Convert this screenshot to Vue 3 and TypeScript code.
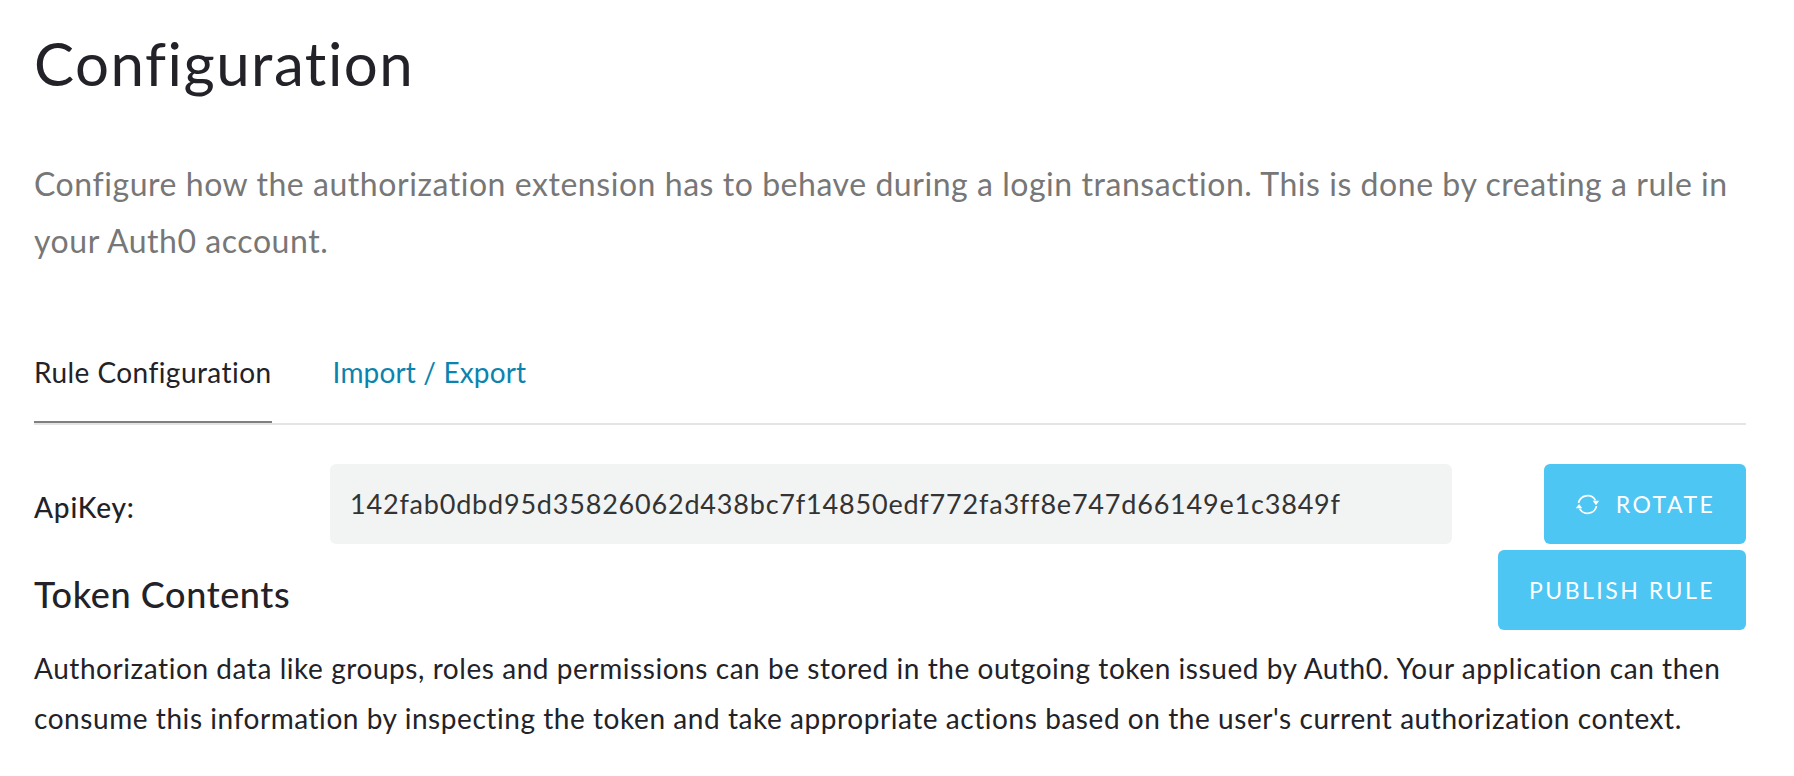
<script setup lang="ts">
const tabs = [
  { label: 'Rule Configuration', active: true },
  { label: 'Import / Export', active: false },
]
const apiKey = '142fab0dbd95d35826062d438bc7f14850edf772fa3ff8e747d66149e1c3849f'
</script>

<template>
  <main class="page">
    <h1 class="title">Configuration</h1>
    <p class="lead">
      Configure how the authorization extension has to behave during a login transaction. This is done by creating a rule in your Auth0 account.
    </p>
    <nav class="tabs">
      <a v-for="tab in tabs" :key="tab.label" class="tab" :class="{ active: tab.active }">{{ tab.label }}</a>
    </nav>
    <div class="key-row">
      <label class="key-label">ApiKey:</label>
      <div class="key-value">{{ apiKey }}</div>
      <button class="btn rotate">
        <svg class="icon" viewBox="0 0 24 24" fill="none" stroke="#fff" stroke-width="1.6">
          <path d="M3.4 10.4A8.8 8.8 0 0 1 19.6 8" />
          <path d="M20.6 13.6A8.8 8.8 0 0 1 4.4 16" />
          <path d="M17 8.4h6.2l-3.1 4.2z" fill="#fff" stroke="none" />
          <path d="M7 15.6H.8l3.1-4.2z" fill="#fff" stroke="none" />
        </svg>
        <span>ROTATE</span>
      </button>
    </div>
    <div class="token-head">
      <h2 class="subtitle">Token Contents</h2>
      <button class="btn publish">PUBLISH RULE</button>
    </div>
    <p class="body">
      Authorization data like groups, roles and permissions can be stored in the outgoing token issued by Auth0. Your application can then consume this information by inspecting the token and take appropriate actions based on the user's current authorization context.
    </p>
  </main>
</template>

<style scoped>
.page {
  box-sizing: border-box;
  width: 1794px;
  height: 776px;
  padding: 27px 48px 0 34px;
  font-family: Lato, "Noto Sans", sans-serif;
  font-variant-ligatures: none;
  color: #222228;
  background: #fff;
  overflow: hidden;
}
.title {
  margin: 0;
  font-size: 60px;
  letter-spacing: 1.5px;
  line-height: 72px;
  font-weight: 400;
}
.lead {
  margin: 56px 0 0;
  font-size: 32px;
  letter-spacing: 0.55px;
  line-height: 57px;
  color: #777;
  font-weight: 400;
}
.tabs {
  margin-top: 69px;
  display: flex;
  gap: 61px;
  border-bottom: 2px solid #e4e4e4;
  height: 85px;
}
.tab {
  box-sizing: border-box;
  font-size: 28px;
  letter-spacing: 0.15px;
  line-height: 40px;
  padding-top: 14px;
  color: #0a84ae;
  height: 85px;
  margin-bottom: -2px;
}
.tab.active {
  letter-spacing: 0.45px;
  color: #222228;
  border-bottom: 2px solid #808080;
}
.key-row {
  margin-top: 39px;
  display: flex;
  align-items: center;
}
.key-label {
  width: 296px;
  font-size: 28px;
  letter-spacing: 0.8px;
  font-weight: 500;
  padding-top: 6px;
}
.key-value {
  box-sizing: border-box;
  width: 1122px;
  height: 80px;
  background: #f2f4f4;
  border-radius: 6px;
  padding-left: 20px;
  font-size: 27px;
  letter-spacing: 0.8px;
  line-height: 80px;
  color: #333;
}
.btn {
  border: 0;
  height: 80px;
  border-radius: 6px;
  background: #4dc6f4;
  color: #fff;
  font-family: inherit;
  font-size: 23px;
  letter-spacing: 2.5px;
  padding: 0;
  display: flex;
  align-items: center;
  justify-content: center;
}
.rotate {
  width: 202px;
  margin-left: 92px;
  gap: 16px;
}
.icon {
  width: 25px;
  height: 25px;
}
.publish {
  width: 248px;
  margin-top: 6px;
}
.token-head {
  display: flex;
  justify-content: space-between;
  align-items: flex-start;
}
.subtitle {
  margin: 28px 0 0;
  font-size: 36px;
  letter-spacing: 0.6px;
  line-height: 44px;
  font-weight: 500;
}
.body {
  margin: 13px 0 0;
  font-size: 28px;
  letter-spacing: 0.56px;
  line-height: 50px;
  color: #222228;
}
</style>
